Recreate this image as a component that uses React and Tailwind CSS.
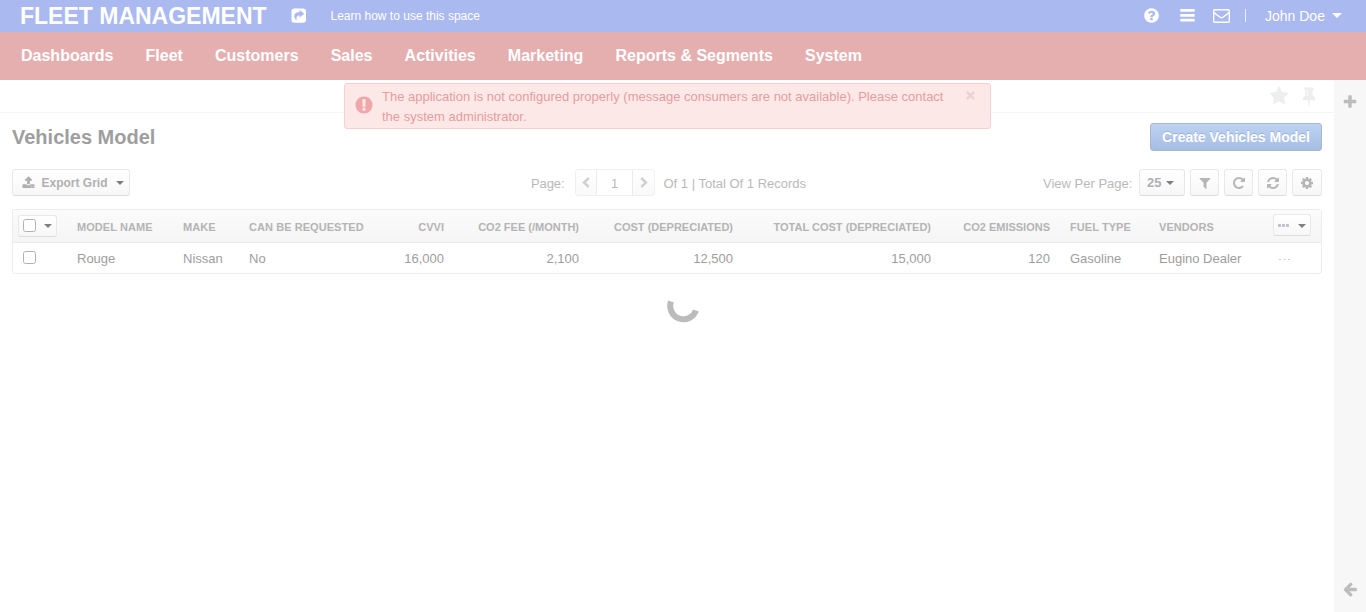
import React from "react";

const PATHS = {
  refresh: "M1639 1056q0 5-1 7-64 268-268 434.5t-478 166.5q-146 0-282.5-55t-243.5-157l-129 129q-19 19-45 19t-45-19-19-45v-448q0-26 19-45t45-19h448q26 0 45 19t19 45-19 45l-137 137q71 66 161 102t187 36q134 0 250-65t186-179q11-17 53-117 8-23 30-23h192q13 0 22.5 9.5t9.5 22.5zm25-800v448q0 26-19 45t-45 19h-448q-26 0-45-19t-19-45 19-45l138-138q-148-137-349-137-134 0-250 65t-186 179q-11 17-53 117-8 23-30 23h-199q-13 0-22.5-9.5t-9.5-22.5v-7q65-268 270-434.5t480-166.5q146 0 284 55.5t245 156.5l130-129q19-19 45-19t45 19 19 45z",
  repeat: "M1664 256v448q0 26-19 45t-45 19h-448q-42 0-59-40-17-39 14-69l138-138q-148-137-349-137-104 0-198.5 40.5t-163.5 109.5-109.5 163.5-40.5 198.5 40.5 198.5 109.5 163.5 163.5 109.5 198.5 40.5q119 0 225-52t179-147q7-10 23-12 15 0 25 9l137 138q9 8 9.5 20.5t-7.5 22.5q-109 132-264 204.5t-327 72.5q-156 0-298-61t-245-164-164-245-61-298 61-298 164-245 245-164 298-61q147 0 284.5 55.5t244.5 156.5l130-129q29-31 70-14 39 17 39 59z",
  filter: "M1595 295q17 41-14 70l-493 493v742q0 42-39 59-13 5-25 5-27 0-45-19l-256-256q-19-19-19-45v-486l-493-493q-31-29-14-70 17-39 59-39h1280q42 0 59 39z",
  cog: "M1152 896q0-106-75-181t-181-75-181 75-75 181 75 181 181 75 181-75 75-181zm512-109v222q0 12-8 23t-20 13l-185 28q-19 54-39 91 35 50 107 138 10 12 10 25t-9 23q-27 37-99 108t-94 71q-12 0-26-9l-138-108q-44 23-91 38-16 136-29 186-7 28-36 28h-222q-14 0-24.5-8.5t-11.5-21.5l-28-184q-49-16-90-37l-141 107q-10 9-25 9-14 0-25-11-126-114-165-168-7-10-7-23 0-12 8-23 15-21 51-66.5t54-70.5q-27-50-41-99l-183-27q-13-2-21-12.5t-8-23.5v-222q0-12 8-23t19-13l186-28q14-46 39-92-40-57-107-138-10-12-10-24 0-10 9-23 26-36 98.5-107.5t94.5-71.5q13 0 26 10l138 107q44-23 91-38 16-136 29-186 7-28 36-28h222q14 0 24.5 8.5t11.5 21.5l28 184q49 16 90 37l142-107q9-9 24-9 13 0 25 10 129 119 165 170 7 8 7 22 0 12-8 23-15 21-51 66.5t-54 70.5q26 50 41 98l183 28q13 2 21 12.5t8 23.5z",
  question: "M1024 1376v-192q0-14-9-23t-23-9h-192q-14 0-23 9t-9 23v192q0 14 9 23t23 9h192q14 0 23-9t9-23zm256-672q0-88-55.5-163t-138.5-116-170-41q-243 0-371 213-15 24 8 42l132 100q7 6 19 6 16 0 25-12 53-68 86-92 34-24 86-24 48 0 85.5 26t37.5 59q0 38-20 61t-68 45q-63 28-115.5 86.5t-52.5 125.5v36q0 14 9 23t23 9h192q14 0 23-9t9-23q0-19 21.5-49.5t54.5-49.5q32-18 49-28.5t46-35 44.5-48 28-60.5 12.5-81zm384 192q0 209-103 385.5t-279.5 279.5-385.5 103-385.5-103-279.5-279.5-103-385.5 103-385.5 279.5-279.5 385.5-103 385.5 103 279.5 279.5 103 385.5z",
  star: "M1728 647q0 22-26 48l-363 354 86 500q1 7 1 20 0 21-10.5 35.5t-30.5 14.5q-19 0-40-12l-449-236-449 236q-22 12-40 12-21 0-31.5-14.5t-10.5-35.5q0-6 2-20l86-500-364-354q-25-27-25-48 0-37 56-46l502-73 225-455q19-41 49-41t49 41l225 455 502 73q56 9 56 46z",
  pin: "M800 864v-448q0-14-9-23t-23-9-23 9-9 23v448q0 14 9 23t23 9 23-9 9-23zm672 352q0 26-19 45t-45 19h-429l-51 483q-2 12-10.5 20.5t-20.5 8.5h-1q-27 0-32-27l-76-485h-404q-26 0-45-19t-19-45q0-123 78.5-221.5t177.5-98.5v-512q-52 0-90-38t-38-90 38-90 90-38h640q52 0 90 38t38 90-38 90-90 38v512q99 0 177.5 98.5t78.5 221.5z",
  plus: "M1600 736v192q0 40-28 68t-68 28h-416v416q0 40-28 68t-68 28h-192q-40 0-68-28t-28-68v-416h-416q-40 0-68-28t-28-68v-192q0-40 28-68t68-28h416v-416q0-40 28-68t68-28h192q40 0 68 28t28 68v416h416q40 0 68 28t28 68z",
  arrowLeft: "M1664 896v128q0 53-32.5 90.5t-84.5 37.5h-704l293 294q38 36 38 90t-38 90l-75 76q-37 37-90 37-52 0-91-37l-651-652q-37-37-37-90 0-52 37-91l651-650q38-38 91-38 52 0 90 38l75 74q38 38 38 91t-38 91l-293 293h704q52 0 84.5 37.5t32.5 90.5z",
  exclamation: "M896 128q209 0 385.5 103t279.5 279.5 103 385.5-103 385.5-279.5 279.5-385.5 103-385.5-103-279.5-279.5-103-385.5 103-385.5 279.5-279.5 385.5-103zm128 1247v-190q0-14-9-23.5t-22-9.5h-192q-13 0-23 10t-10 23v190q0 13 10 23t23 10h192q13 0 22-9.5t9-23.5zm-2-344l18-621q0-12-10-18-10-8-24-8h-220q-14 0-24 8-10 6-10 18l17 621q0 10 10 17.5t24 7.5h185q14 0 23.5-7.5t10.5-17.5z",
  upload: "M1344 1472q0-26-19-45t-45-19-45 19-19 45 19 45 45 19 45-19 19-45zm256 0q0-26-19-45t-45-19-45 19-19 45 19 45 45 19 45-19 19-45zm128-224v320q0 40-28 68t-68 28h-1472q-40 0-68-28t-28-68v-320q0-40 28-68t68-28h427q21 56 70.5 92t110.5 36h256q61 0 110.5-36t70.5-92h427q40 0 68 28t28 68zm-325-648q-17 40-59 40h-256v448q0 26-19 45t-45 19h-256q-26 0-45-19t-19-45v-448h-256q-42 0-59-40-17-39 14-69l448-448q18-19 45-19t45 19l448 448q31 30 14 69z",
};

function Icon({ name, className }) {
  return (
    <svg viewBox="0 0 1792 1792" fill="currentColor" className={"shrink-0 " + className}>
      <path d={PATHS[name]} />
    </svg>
  );
}

function Caret({ className = "" }) {
  return (
    <svg viewBox="0 0 8 4" className={"h-1 w-2 shrink-0 fill-[#7f7f7f] " + className}>
      <path d="M0 0h8L4 4z" />
    </svg>
  );
}

const NAV = ["Dashboards", "Fleet", "Customers", "Sales", "Activities", "Marketing", "Reports & Segments", "System"];

const COLUMNS = [
  { label: "Model Name", value: "Rouge" },
  { label: "Make", value: "Nissan" },
  { label: "Can Be Requested", value: "No" },
  { label: "CVVI", value: "16,000", right: true },
  { label: "CO2 Fee (/Month)", value: "2,100", right: true },
  { label: "Cost (Depreciated)", value: "12,500", right: true },
  { label: "Total Cost (Depreciated)", value: "15,000", right: true },
  { label: "CO2 Emissions", value: "120", right: true },
  { label: "Fuel Type", value: "Gasoline" },
  { label: "Vendors", value: "Eugino Dealer" },
];

const GRID = "grid grid-cols-[54px_106px_66px_145px_70px_135px_154px_198px_119px_89px_113px_1fr]";
const BUTTON = "flex items-center rounded-[3px] border border-[#e8e8e8] border-b-[#dcdcdc] bg-linear-to-b from-white to-[#f7f7f7]";

function Checkbox() {
  return <span className="block size-[13px] shrink-0 rounded-[2.5px] border border-[#b2b2b2] bg-white" />;
}

function TopBar() {
  return (
    <header className="flex h-8 items-center bg-[#aab9f0] pl-5 text-white">
      <h1 className="w-[271px] text-[23px] leading-8 font-bold whitespace-nowrap">FLEET MANAGEMENT</h1>
      <svg viewBox="0 0 15 15" className="mb-[2px] size-[15px] shrink-0">
        <rect x="0.5" y="0.5" width="14.5" height="14.3" rx="2.8" fill="#fff" />
        <path d="M8.600 2 13.200 5.700 8.600 9.400V7.500C6.200 7.400 5 8.800 5.700 12.400 1.600 9.200 2.600 3.900 8.600 3.900z" fill="#aab9f0" />
      </svg>
      <a className="ml-[24.5px] text-[12px] whitespace-nowrap">Learn how to use this space</a>
      <div className="ml-auto flex items-center pr-[24px]">
        <Icon name="question" className="mb-[2px] size-[17px]" />
        <svg viewBox="0 0 15 13" className="mb-[2px] ml-5 h-[13px] w-[15px] fill-white">
          <path d="M0.300 0h14.400v2.800H0.300zM0.300 4.900h14.400v2.800H0.300zM0.300 9.800h14.400v2.700H0.300z" />
        </svg>
        <svg viewBox="0 0 17 14" fill="none" stroke="#fff" strokeWidth="1.4" className="ml-[18px] h-[14px] w-[17px]">
          <rect x="0.7" y="0.7" width="15.6" height="12.6" rx="1.2" />
          <path d="M1 3.6C3.5 5.4 7 8.7 8.5 8.7S13.500 5.400 16 3.600" />
        </svg>
        <span className="mt-[-2px] ml-[15px] h-[13px] w-px bg-white/80" />
        <span className="ml-[19px] w-[61px] text-[14px] whitespace-nowrap">John Doe</span>
        <svg viewBox="0 0 10 5" className="mb-px ml-[6px] h-[5px] w-[10px] fill-white">
          <path d="M0 0h10L5 5z" />
        </svg>
      </div>
    </header>
  );
}

function Alert() {
  return (
    <div className="absolute top-[83px] left-[344px] flex h-[46px] w-[647px] rounded-[3px] border border-[#f8d0d0] bg-[#fde8e8] text-[#e69d9e]">
      <Icon name="exclamation" className="mt-[11px] ml-[9px] size-5 text-[#eea8aa]" />
      <p className="mt-[3px] ml-2 w-[570px] text-[13px] leading-5 whitespace-nowrap">
        The application is not configured properly (message consumers are not available). Please contact
        <br />
        the system administrator.
      </p>
      <svg viewBox="0 0 9 9" stroke="#e9d2d2" strokeWidth="2.300" className="mt-[7px] ml-[13.5px] size-[9px]">
        <path d="M0.900 0.900 8.100 8.100M8.100 0.900 0.900 8.100" />
      </svg>
    </div>
  );
}

function Pager() {
  return (
    <div className="flex items-center text-[13px] text-[#b9b9b9]">
      <span className="w-[44px] pt-[2px] tracking-[-0.1px]">Page:</span>
      <div className="flex h-[27px] w-[80px] overflow-hidden rounded-[3px] border border-[#f0f0f0] bg-linear-to-b from-white to-[#f9f9f9]">
        <span className="flex w-[20px] items-center justify-center">
          <svg viewBox="0 0 8 11" fill="none" stroke="#d0d0d0" strokeWidth="2.4" className="h-[11px] w-2">
            <path d="M6.800 1 2 5.500 6.800 10" />
          </svg>
        </span>
        <span className="flex w-[37px] items-center justify-center border-x border-[#ebebeb] bg-white pt-[2px]">1</span>
        <span className="flex w-[21px] items-center justify-center">
          <svg viewBox="0 0 8 11" fill="none" stroke="#d0d0d0" strokeWidth="2.4" className="h-[11px] w-2">
            <path d="M1.200 1 6 5.500 1.200 10" />
          </svg>
        </span>
      </div>
      <span className="ml-[8.500px] pt-[2px] whitespace-nowrap">Of 1 | Total Of 1 Records</span>
    </div>
  );
}

function Toolbar() {
  return (
    <div className="mt-[18px] flex h-[27px] items-center text-[13px]">
      <div className={BUTTON + " h-[27px] w-[118px] pl-[9px] text-[#b0b0b0]"}>
        <Icon name="upload" className="size-[13px]" />
        <span className="ml-[6.5px] w-[67px] text-[12px] font-bold whitespace-nowrap">Export Grid</span>
        <Caret className="mt-px ml-[7.5px]" />
      </div>
      <div className="ml-[401px]">
        <Pager />
      </div>
      <div className="ml-auto flex items-center gap-[5px]">
        <span className="w-[91px] pt-[2px] whitespace-nowrap text-[#b9b9b9]">View Per Page:</span>
        <div className={BUTTON + " h-[27px] w-[46px] pl-[7px] font-bold text-[#b0b0b0]"}>
          25
          <Caret className="mt-px ml-[5px]" />
        </div>
        <div className="flex gap-[5px]">
          {["filter", "repeat", "refresh", "cog"].map((name) => (
            <div key={name} className={BUTTON + (name === "cog" ? " w-[30px]" : " w-[29px]") + " h-[27px] justify-center text-[#b6b6b6]"}>
              <Icon name={name} className="size-[14px]" />
            </div>
          ))}
        </div>
      </div>
    </div>
  );
}

function DataGrid() {
  return (
    <div className="mt-[13px] h-[65px] overflow-hidden rounded-[3px] border border-[#ececec] text-[13px] text-[#9e9e9e]">
      <div className={GRID + " h-[33px] items-center border-b border-[#ebebeb] bg-linear-to-b from-[#fbfbfb] to-[#f5f5f5]"}>
        <div className={BUTTON + " mt-[-1px] ml-[5px] h-[22px] w-[39px] gap-2 pl-1"}>
          <Checkbox />
          <Caret />
        </div>
        {COLUMNS.map((c) => (
          <div key={c.label} className={"px-[10px] pt-[2px] text-[11px] font-bold whitespace-nowrap text-[#b4b4b4] uppercase" + (c.right ? " text-right" : " tracking-[0.06px]")}>
            {c.label}
          </div>
        ))}
        <div className={BUTTON + " mt-[-2px] ml-[11px] h-[22px] w-[38px] pl-1"}>
          <svg viewBox="0 0 11 3" className="h-[3px] w-[11px] fill-[#bcc0cc]">
            <rect width="3" height="3" rx="0.8" />
            <rect x="4" width="3" height="3" rx="0.8" />
            <rect x="8" width="3" height="3" rx="0.8" />
          </svg>
          <Caret className="mt-px ml-[9px]" />
        </div>
      </div>
      <div className={GRID + " h-[30px] items-center"}>
        <div className="pb-[2px] pl-[10px]">
          <Checkbox />
        </div>
        {COLUMNS.map((c) => (
          <div key={c.label} className={"px-[10px] pt-[2px] whitespace-nowrap" + (c.right ? " text-right" : "")}>
            {c.value}
          </div>
        ))}
        <svg viewBox="0 0 11 1" className="mt-[2px] ml-[17px] h-px w-[11px] fill-[#cdcdcd]">
          <path d="M0 0h2v1H0zM4.500 0h2v1h-2zM9 0h2v1H9z" />
        </svg>
      </div>
    </div>
  );
}

export default function App() {
  return (
    <div className="relative flex h-[612px] w-[1366px] flex-col overflow-hidden bg-white font-['Liberation_Sans',Arial,sans-serif]">
      <TopBar />
      <nav className="flex h-12 items-center gap-[32.1px] bg-[#e5afb0] pl-[21px] text-[16px] font-bold whitespace-nowrap text-white">
        {NAV.map((item) => (
          <a key={item}>{item}</a>
        ))}
      </nav>
      <div className="flex flex-1">
        <main className="flex w-[1334px] flex-col">
          <div className="flex h-[33px] items-center justify-end gap-[10px] border-b border-[#f5f5f5] pr-[15px] pb-px text-[#eeeeee]">
            <Icon name="star" className="size-[20px]" />
            <Icon name="pin" className="size-[20px]" />
          </div>
          <div className="px-3">
            <div className="mt-[10px] flex h-7 items-center justify-between">
              <h2 className="text-[20px] leading-7 font-bold text-[#9e9e9e]">Vehicles Model</h2>
              <button className="h-7 w-[172px] rounded-[3px] border border-[#a9b7ce] bg-linear-to-b from-[#bed3f3] to-[#a6bde3] text-[14px] font-bold whitespace-nowrap text-white [text-shadow:0_-1px_0_rgba(100,125,170,0.35)]">
                Create Vehicles Model
              </button>
            </div>
            <Toolbar />
            <DataGrid />
            <svg viewBox="0 0 34 34" fill="none" stroke="#bbbbbb" strokeWidth="6" className="mt-[16px] ml-[653.5px] size-[34px]">
              <path d="M5 11.500A13 13 0 0 0 30 20.500" />
            </svg>
          </div>
        </main>
        <aside className="flex w-8 flex-col items-center justify-between bg-[#f7f7f7] pt-[14px] pb-[15px] text-[#bcbcbc]">
          <Icon name="plus" className="size-4" />
          <Icon name="arrowLeft" className="size-4" />
        </aside>
      </div>
      <Alert />
    </div>
  );
}
